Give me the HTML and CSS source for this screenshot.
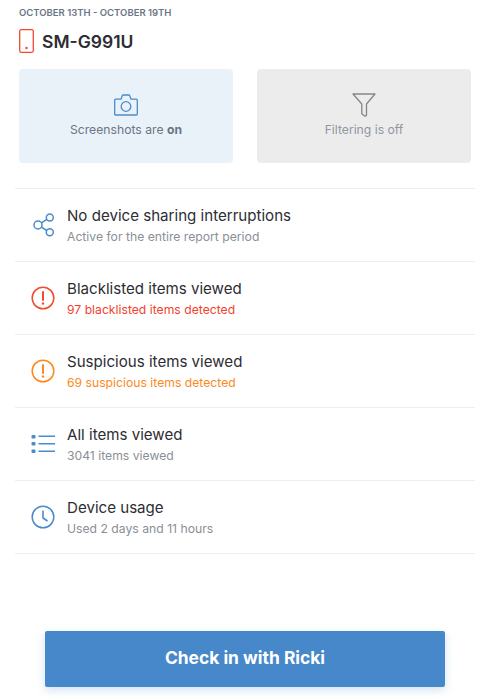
FILE: index.html
```html
<!DOCTYPE html>
<html lang="en">
<head>
<meta charset="utf-8">
<title>Report</title>
<link rel="stylesheet" href="styles.css">
</head>
<body>
<main class="page">
  <header class="head">
    <div class="date">OCTOBER 13TH - OCTOBER 19TH</div>
    <div class="device">
      <svg class="phone" width="15" height="24" viewBox="0 0 15 24"><rect x="0.700" y="0.700" width="13.600" height="22.600" rx="1.500" fill="none" stroke="#f4492d" stroke-width="1.300"/><circle cx="7.500" cy="19" r="1.200" fill="#f4492d"/></svg>
      <h1 class="device-name">SM-G991U</h1>
    </div>
  </header>
  <section class="cards">
    <div class="card card-on">
      <svg class="card-icon" width="24" height="22" viewBox="0 0 24 22"><path d="M1.700 5.200H7L8.200 1.800C8.400 1.300 8.700 1 9.200 1H14.800C15.300 1 15.600 1.300 15.800 1.800L17 5.200H22.300C22.900 5.200 23.300 5.600 23.300 6.200V20C23.300 20.600 22.900 21 22.300 21H1.700C1.100 21 0.700 20.600 0.700 20V6.200C0.700 5.600 1.100 5.200 1.700 5.200Z" fill="none" stroke="#4a8bcb" stroke-width="1.300" stroke-linejoin="round"/><circle cx="12" cy="12.500" r="4.800" fill="none" stroke="#4a8bcb" stroke-width="1.300"/></svg>
      <div class="card-text">Screenshots are <b>on</b></div>
    </div>
    <div class="card card-off">
      <svg class="card-icon" width="24" height="24" viewBox="0 0 24 24"><path d="M1 1H23L14.500 11V22.500L13 23.300L9.800 20.800V11Z" fill="none" stroke="#868686" stroke-width="1.300" stroke-linejoin="round"/></svg>
      <div class="card-text">Filtering is off</div>
    </div>
  </section>
  <section class="list">
    <div class="row">
      <svg class="row-icon" width="24" height="26" viewBox="0 0 24 26"><g fill="none" stroke="#4a8bcb" stroke-width="1.500"><circle cx="7" cy="13" r="4"/><circle cx="18.800" cy="5.500" r="3.500"/><circle cx="18.800" cy="20.300" r="3.500"/><path d="M10.400 10.800L15.800 7.300M10.400 15.200L15.800 18.500"/></g></svg>
      <div class="row-body"><div class="row-title">No device sharing interruptions</div><div class="row-sub">Active for the entire report period</div></div>
    </div>
    <div class="row">
      <svg class="row-icon" width="24" height="24" viewBox="0 0 24 24"><circle cx="12" cy="12" r="10.800" fill="none" stroke="#f4492d" stroke-width="1.500"/><path d="M12 6V14" stroke="#f4492d" stroke-width="2" stroke-linecap="round"/><circle cx="12" cy="17.500" r="1.200" fill="#f4492d"/></svg>
      <div class="row-body"><div class="row-title">Blacklisted items viewed</div><div class="row-sub red">97 blacklisted items detected</div></div>
    </div>
    <div class="row">
      <svg class="row-icon" width="24" height="24" viewBox="0 0 24 24"><circle cx="12" cy="12" r="10.800" fill="none" stroke="#fb8a1c" stroke-width="1.500"/><path d="M12 6V14" stroke="#fb8a1c" stroke-width="2" stroke-linecap="round"/><circle cx="12" cy="17.500" r="1.200" fill="#fb8a1c"/></svg>
      <div class="row-body"><div class="row-title">Suspicious items viewed</div><div class="row-sub orange">69 suspicious items detected</div></div>
    </div>
    <div class="row">
      <svg class="row-icon" width="24" height="20" viewBox="0 0 24 20"><g fill="#4a8bcb"><rect x="0.500" y="1" width="4" height="3.400" rx="1"/><rect x="0.500" y="8" width="4" height="3.400" rx="1"/><rect x="0.500" y="15.500" width="4" height="3.400" rx="1"/><rect x="7.500" y="1.500" width="16.500" height="1.500"/><rect x="7.500" y="9" width="16.500" height="1.500"/><rect x="7.500" y="16.500" width="16.500" height="1.500"/></g></svg>
      <div class="row-body"><div class="row-title">All items viewed</div><div class="row-sub">3041 items viewed</div></div>
    </div>
    <div class="row">
      <svg class="row-icon" width="24" height="24" viewBox="0 0 24 24"><circle cx="12" cy="12" r="10.800" fill="none" stroke="#4a8bcb" stroke-width="1.500"/><path d="M12 5.500V13L16.500 16" fill="none" stroke="#4a8bcb" stroke-width="1.600"/></svg>
      <div class="row-body"><div class="row-title">Device usage</div><div class="row-sub">Used 2 days and 11 hours</div></div>
    </div>
  </section>
  <div class="cta-wrap"><button class="cta">Check in with Ricki</button></div>
</main>
</body>
</html>
```
FILE: styles.css
```css
* { box-sizing: border-box; }
html, body { margin: 0; padding: 0; height: 100%; background: #fff; overflow: hidden; }
body { font-family: "Inter", "Liberation Sans", sans-serif; color: #2d2d33; }
.page { width: 483px; height: 698px; display: flex; flex-direction: column; }
.head { padding: 7px 19px 0; }
.date { font-size: 9.500px; line-height: 12px; font-weight: 600; color: #6b7585; }
.device { display: flex; align-items: center; gap: 8px; margin-top: 9px; height: 25px; }
.phone { flex: none; }
.device-name { margin: 0; font-size: 17.500px; font-weight: 600; line-height: 25px; color: #2d2d33; position: relative; top: 1px; }
.cards { display: flex; gap: 24px; padding: 16px 12px 0 19px; }
.card { width: 214px; height: 94px; border-radius: 4px; display: flex; flex-direction: column; align-items: center; padding-top: 25px; }
.card-on { background: #eaf2f9; color: #6b7585; }
.card-off { background: #ececec; color: #8f97a3; padding-top: 24px; }
.card-icon { display: block; }
.card-text { font-size: 12.200px; line-height: 16px; margin-top: 6px; }
.card-off .card-text { margin-top: 5px; }
.card-text b { font-weight: 700; }
.list { margin: 25px 8px 0 15px; border-top: 1px solid #eeeeee; }
.row { height: 73px; border-bottom: 1px solid #eeeeee; display: flex; align-items: center; }
.row-icon { flex: none; margin-left: 16px; }
.row-body { margin-left: 12px; }
.row-title { font-size: 15.100px; line-height: 20px; color: #2d2d33; }
.row-sub { font-size: 12.200px; line-height: 16px; margin-top: 3px; color: #8a8f96; }
.red { color: #f4412d; }
.orange { color: #fb8a1c; }
.cta-wrap { margin-top: 77px; padding-left: 45px; }
.cta { display: block; width: 400px; height: 56px; padding: 0 0 3px; border: 0; border-radius: 2px; background: #4688c9; color: #fff; font: 700 17.400px "Inter", "Liberation Sans", sans-serif; box-shadow: 0 3px 8px rgba(70,136,201,.25); }
```
